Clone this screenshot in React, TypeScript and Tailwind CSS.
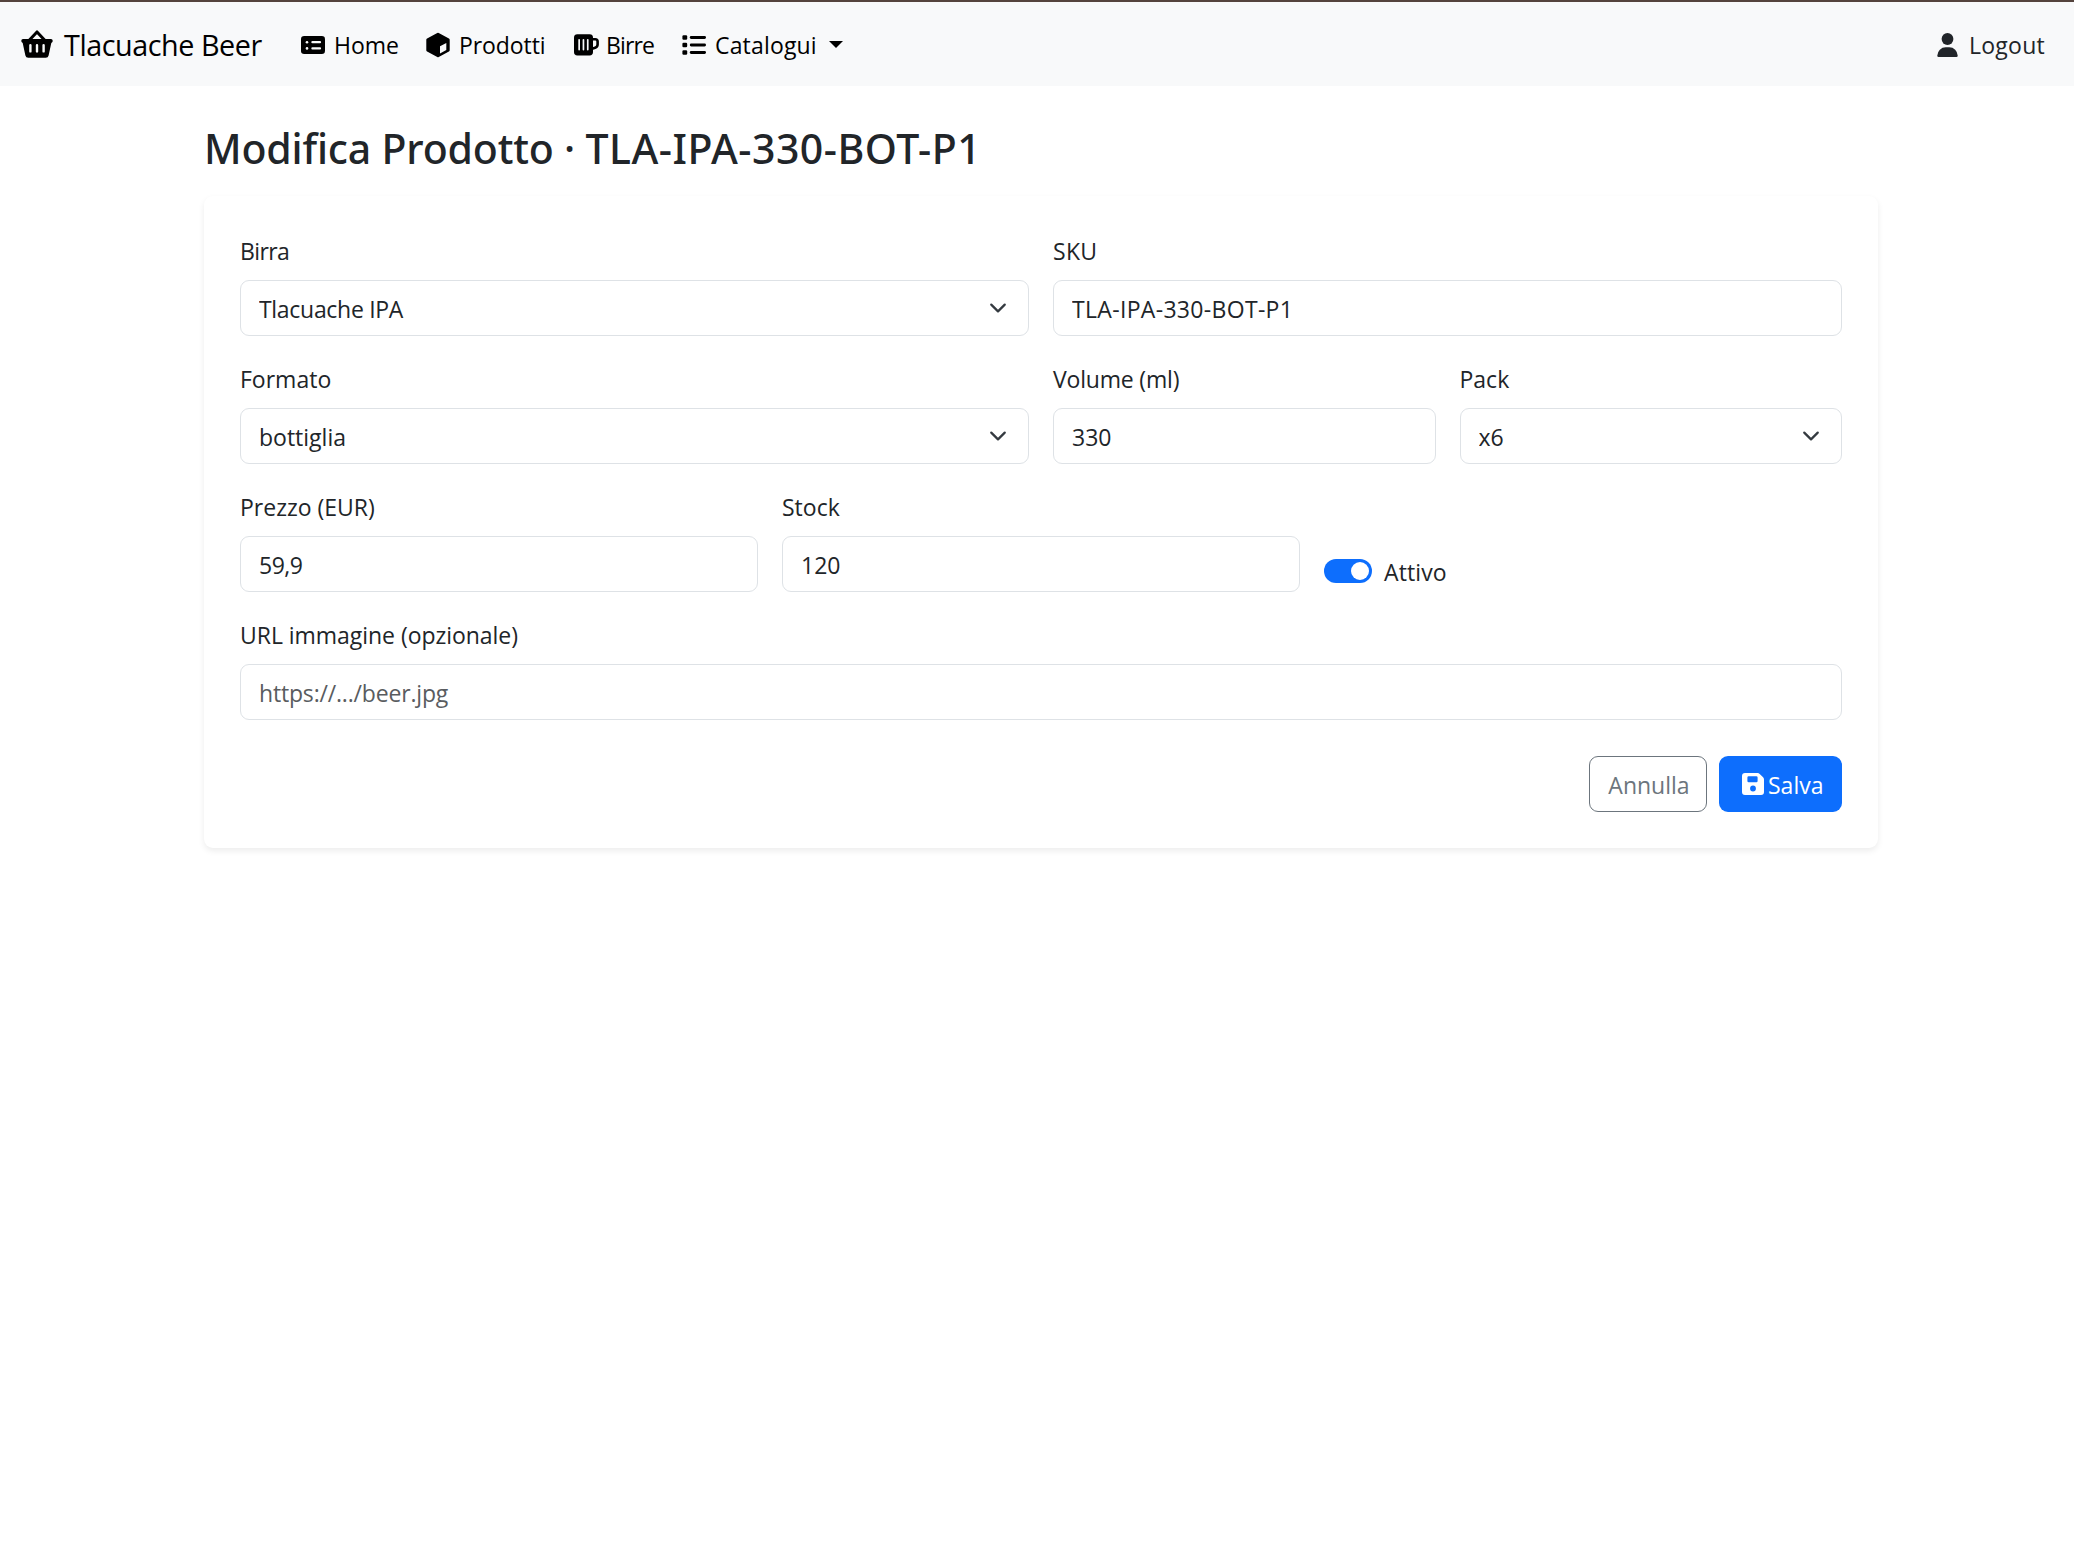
import React from "react";

const BasketIcon = () => (
  <svg width="32" height="28" viewBox="0 0 32 28" className="shrink-0">
    <path d="M8 10.5 L16 1.9 L24 10.5" fill="none" stroke="currentColor" strokeWidth="3" strokeLinejoin="round" />
    <path
      fillRule="evenodd"
      fill="currentColor"
      d="M2 9H30A2 2 0 0 1 30.3 12.9L27.6 25.4A3 3 0 0 1 24.7 27.8H7.3A3 3 0 0 1 4.4 25.4L1.7 12.9A2 2 0 0 1 2 9ZM8.2 15.2V21.4A1.2 1.2 0 0 0 10.6 21.4V15.2A1.2 1.2 0 0 0 8.2 15.2ZM14.8 15.2V21.4A1.2 1.2 0 0 0 17.2 21.4V15.2A1.2 1.2 0 0 0 14.8 15.2ZM21.4 15.2V21.4A1.2 1.2 0 0 0 23.8 21.4V15.2A1.2 1.2 0 0 0 21.4 15.2Z"
    />
  </svg>
);

const CardListIcon = () => (
  <svg width="24" height="18" viewBox="0 0 24 18" className="shrink-0">
    <rect width="24" height="18" rx="3.2" fill="currentColor" />
    <g fill="#f8f9fa">
      <circle cx="6" cy="6.2" r="1.3" />
      <circle cx="6" cy="12.4" r="1.3" />
      <rect x="10.3" y="5.1" width="9.8" height="2.2" rx="1.1" />
      <rect x="10.3" y="11.3" width="9.8" height="2.2" rx="1.1" />
    </g>
  </svg>
);

const CubeIcon = () => (
  <svg width="24" height="26" viewBox="0 0 24 26" className="shrink-0">
    <path
      d="M12 2.2 L22.2 7.8 V18.2 L12 23.8 L1.8 18.2 V7.8 Z"
      fill="currentColor"
      stroke="currentColor"
      strokeWidth="3"
      strokeLinejoin="round"
    />
    <path d="M14 14.3 L20.3 10.9 V18 L14 21.6 Z" fill="#f8f9fa" />
  </svg>
);

const MugIcon = () => (
  <svg width="25" height="22" viewBox="0 0 25 22" className="shrink-0">
    <rect y="0.2" width="19" height="21.3" rx="3.4" fill="currentColor" />
    <path d="M18 5.2 H21.2 A2.4 2.4 0 0 1 23.6 7.6 V10.6 A3.4 3.4 0 0 1 21.2 13.8 L18 14.8" fill="none" stroke="currentColor" strokeWidth="2.6" />
    <g fill="#f8f9fa">
      <rect x="4.3" y="5" width="1.7" height="11.4" rx="0.85" />
      <rect x="8.6" y="5" width="1.7" height="11.4" rx="0.85" />
      <rect x="12.9" y="5" width="1.7" height="11.4" rx="0.85" />
    </g>
  </svg>
);

const ListIcon = () => (
  <svg width="24" height="20" viewBox="0 0 24 20" fill="currentColor" className="shrink-0">
    <rect x="0.4" y="0.2" width="4.8" height="4.6" rx="1.2" />
    <rect x="0.4" y="7.7" width="4.8" height="4.6" rx="1.2" />
    <rect x="0.4" y="15.2" width="4.8" height="4.6" rx="1.2" />
    <rect x="7.8" y="1.1" width="16.2" height="2.8" rx="1.4" />
    <rect x="7.8" y="8.6" width="16.2" height="2.8" rx="1.4" />
    <rect x="7.8" y="16.1" width="16.2" height="2.8" rx="1.4" />
  </svg>
);

const UserIcon = () => (
  <svg width="21" height="24" viewBox="0 0 21 24" fill="currentColor" className="shrink-0">
    <circle cx="10.5" cy="6" r="5.9" />
    <path d="M0.3 22.6 A8.4 8.6 0 0 1 8.7 14.2 H12.3 A8.4 8.6 0 0 1 20.7 22.6 A1.3 1.3 0 0 1 19.4 24 H1.6 A1.3 1.3 0 0 1 0.3 22.6 Z" />
  </svg>
);

const FloppyIcon = () => (
  <svg width="22" height="22" viewBox="0 0 22 22" className="shrink-0">
    <path
      fillRule="evenodd"
      fill="currentColor"
      d="M3 0H15.6A3 3 0 0 1 17.7 0.9L21.1 4.3A3 3 0 0 1 22 6.4V19A3 3 0 0 1 19 22H3A3 3 0 0 1 0 19V3A3 3 0 0 1 3 0ZM6.6 3.3A1.2 1.2 0 0 0 5.4 4.5V8A1.2 1.2 0 0 0 6.6 9.2H14.4A1.2 1.2 0 0 0 15.6 8V4.5A1.2 1.2 0 0 0 14.4 3.3ZM11 12.6A2.9 2.9 0 1 0 11 18.4A2.9 2.9 0 1 0 11 12.6Z"
    />
  </svg>
);

const control =
  "block h-14 w-full appearance-none rounded-[9px] border border-[#dee2e6] bg-white pt-0.5 pl-[18px] text-[#212529] outline-none placeholder:text-[#595c5f]";

function Field({ label, span, labelSpacing = "", children }: { label: string; span: string; labelSpacing?: string; children: React.ReactNode }) {
  return (
    <div className={span}>
      <label className={`mb-2.5 block leading-[38px] ${labelSpacing}`}>{label}</label>
      {children}
    </div>
  );
}

function Select({ value, spacing = "" }: { value: string; spacing?: string }) {
  return (
    <div className="relative">
      <select className={`${control} ${spacing}`} defaultValue={value}>
        <option>{value}</option>
      </select>
      <svg width="18" height="18" viewBox="0 0 16 16" className="pointer-events-none absolute top-[19px] right-[22px]">
        <path d="m2 5 6 6 6-6" fill="none" stroke="#343a40" strokeWidth="2" strokeLinecap="round" strokeLinejoin="round" />
      </svg>
    </div>
  );
}

export default function App() {
  return (
    <div className="min-h-[1564px] bg-white font-['Open_Sans','Noto_Sans',sans-serif] text-[23px] leading-9 text-[#212529]">
      <nav className="flex h-[86px] items-center border-t-2 border-[#54433d] bg-[#f8f9fa] pl-[21px] text-black">
        <a className="flex w-[280px] items-center gap-[11px] text-[28.75px] tracking-[-0.45px]">
          <BasketIcon />
          <span className="pt-0.5 whitespace-nowrap">Tlacuache Beer</span>
        </a>
        <a className="flex w-[125px] items-center gap-[9px]">
          <span className="pt-0.5"><CardListIcon /></span>
          <span className="pt-0.5">Home</span>
        </a>
        <a className="flex w-[148px] items-center gap-[9px]">
          <span className="pt-0.5"><CubeIcon /></span>
          <span className="pt-0.5 tracking-[-0.08px]">Prodotti</span>
        </a>
        <a className="flex w-[108px] items-center gap-[7px]">
          <span className="pt-px"><MugIcon /></span>
          <span className="pt-0.5 tracking-[-0.85px]">Birre</span>
        </a>
        <a className="flex items-center">
          <span className="pt-0.5"><ListIcon /></span>
          <span className="ml-[9px] w-[114px] pt-0.5 tracking-[0.17px]">Catalogui</span>
          <span className="border-x-[7px] border-t-[7px] border-x-transparent border-t-black" />
        </a>
        <a className="ml-auto flex w-[137px] items-center gap-[11px] text-[#212529]">
          <span className="pt-0.5"><UserIcon /></span>
          <span className="pt-0.5 tracking-[0.25px]">Logout</span>
        </a>
      </nav>

      <main className="ml-[204px] w-[1674px] pt-9">
        <h1 className="mb-[22px] font-['Noto_Sans',sans-serif] text-[41px] leading-[52px] font-medium tracking-[-0.18px]">
          Modifica Prodotto · <span className="tracking-[0.5px]">TLA-IPA-330-BOT-P1</span>
        </h1>

        <form className="rounded-[9px] bg-white p-9 shadow-[0_3px_6px_rgba(0,0,0,0.075)]">
          <div className="grid grid-cols-12 gap-6">
            <Field label="Birra" span="col-span-6" labelSpacing="tracking-[-0.6px]">
              <Select value="Tlacuache IPA" spacing="tracking-[-0.3px]" />
            </Field>
            <Field label="SKU" span="col-span-6" labelSpacing="tracking-[0.3px]">
              <input className={`${control} tracking-[0.32px]`} defaultValue="TLA-IPA-330-BOT-P1" />
            </Field>
            <Field label="Formato" span="col-span-6">
              <Select value="bottiglia" />
            </Field>
            <Field label="Volume (ml)" span="col-span-3" labelSpacing="tracking-[-0.19px]">
              <input className={control} defaultValue="330" />
            </Field>
            <Field label="Pack" span="col-span-3">
              <Select value="x6" />
            </Field>
            <Field label="Prezzo (EUR)" span="col-span-4">
              <input className={`${control} tracking-[-0.5px]`} defaultValue="59,9" />
            </Field>
            <Field label="Stock" span="col-span-4">
              <input className={control} defaultValue="120" />
            </Field>
            <div className="col-span-4 flex items-end pb-[3px]">
              <span className="mb-1.5 flex h-6 w-12 items-center justify-end rounded-full bg-[#0d6efd] pr-[3px]">
                <span className="h-[18px] w-[18px] rounded-full bg-white" />
              </span>
              <span className="-mb-px ml-3 tracking-[0.1px]">Attivo</span>
            </div>
            <Field label="URL immagine (opzionale)" span="col-span-12" labelSpacing="tracking-[-0.04px]">
              <input className={`${control} tracking-[-0.18px]`} placeholder="https://.../beer.jpg" />
            </Field>
          </div>

          <div className="mt-9 flex justify-end gap-3">
            <button type="button" className="h-14 w-[118px] rounded-[9px] border border-[#6c757d] pt-0.5 pl-0.5 text-[#6c757d]">
              Annulla
            </button>
            <button type="button" className="flex h-14 w-[123px] items-center gap-1 rounded-[9px] bg-[#0d6efd] pl-[23px] text-white">
              <FloppyIcon />
              <span className="pt-0.5">Salva</span>
            </button>
          </div>
        </form>
      </main>
    </div>
  );
}
